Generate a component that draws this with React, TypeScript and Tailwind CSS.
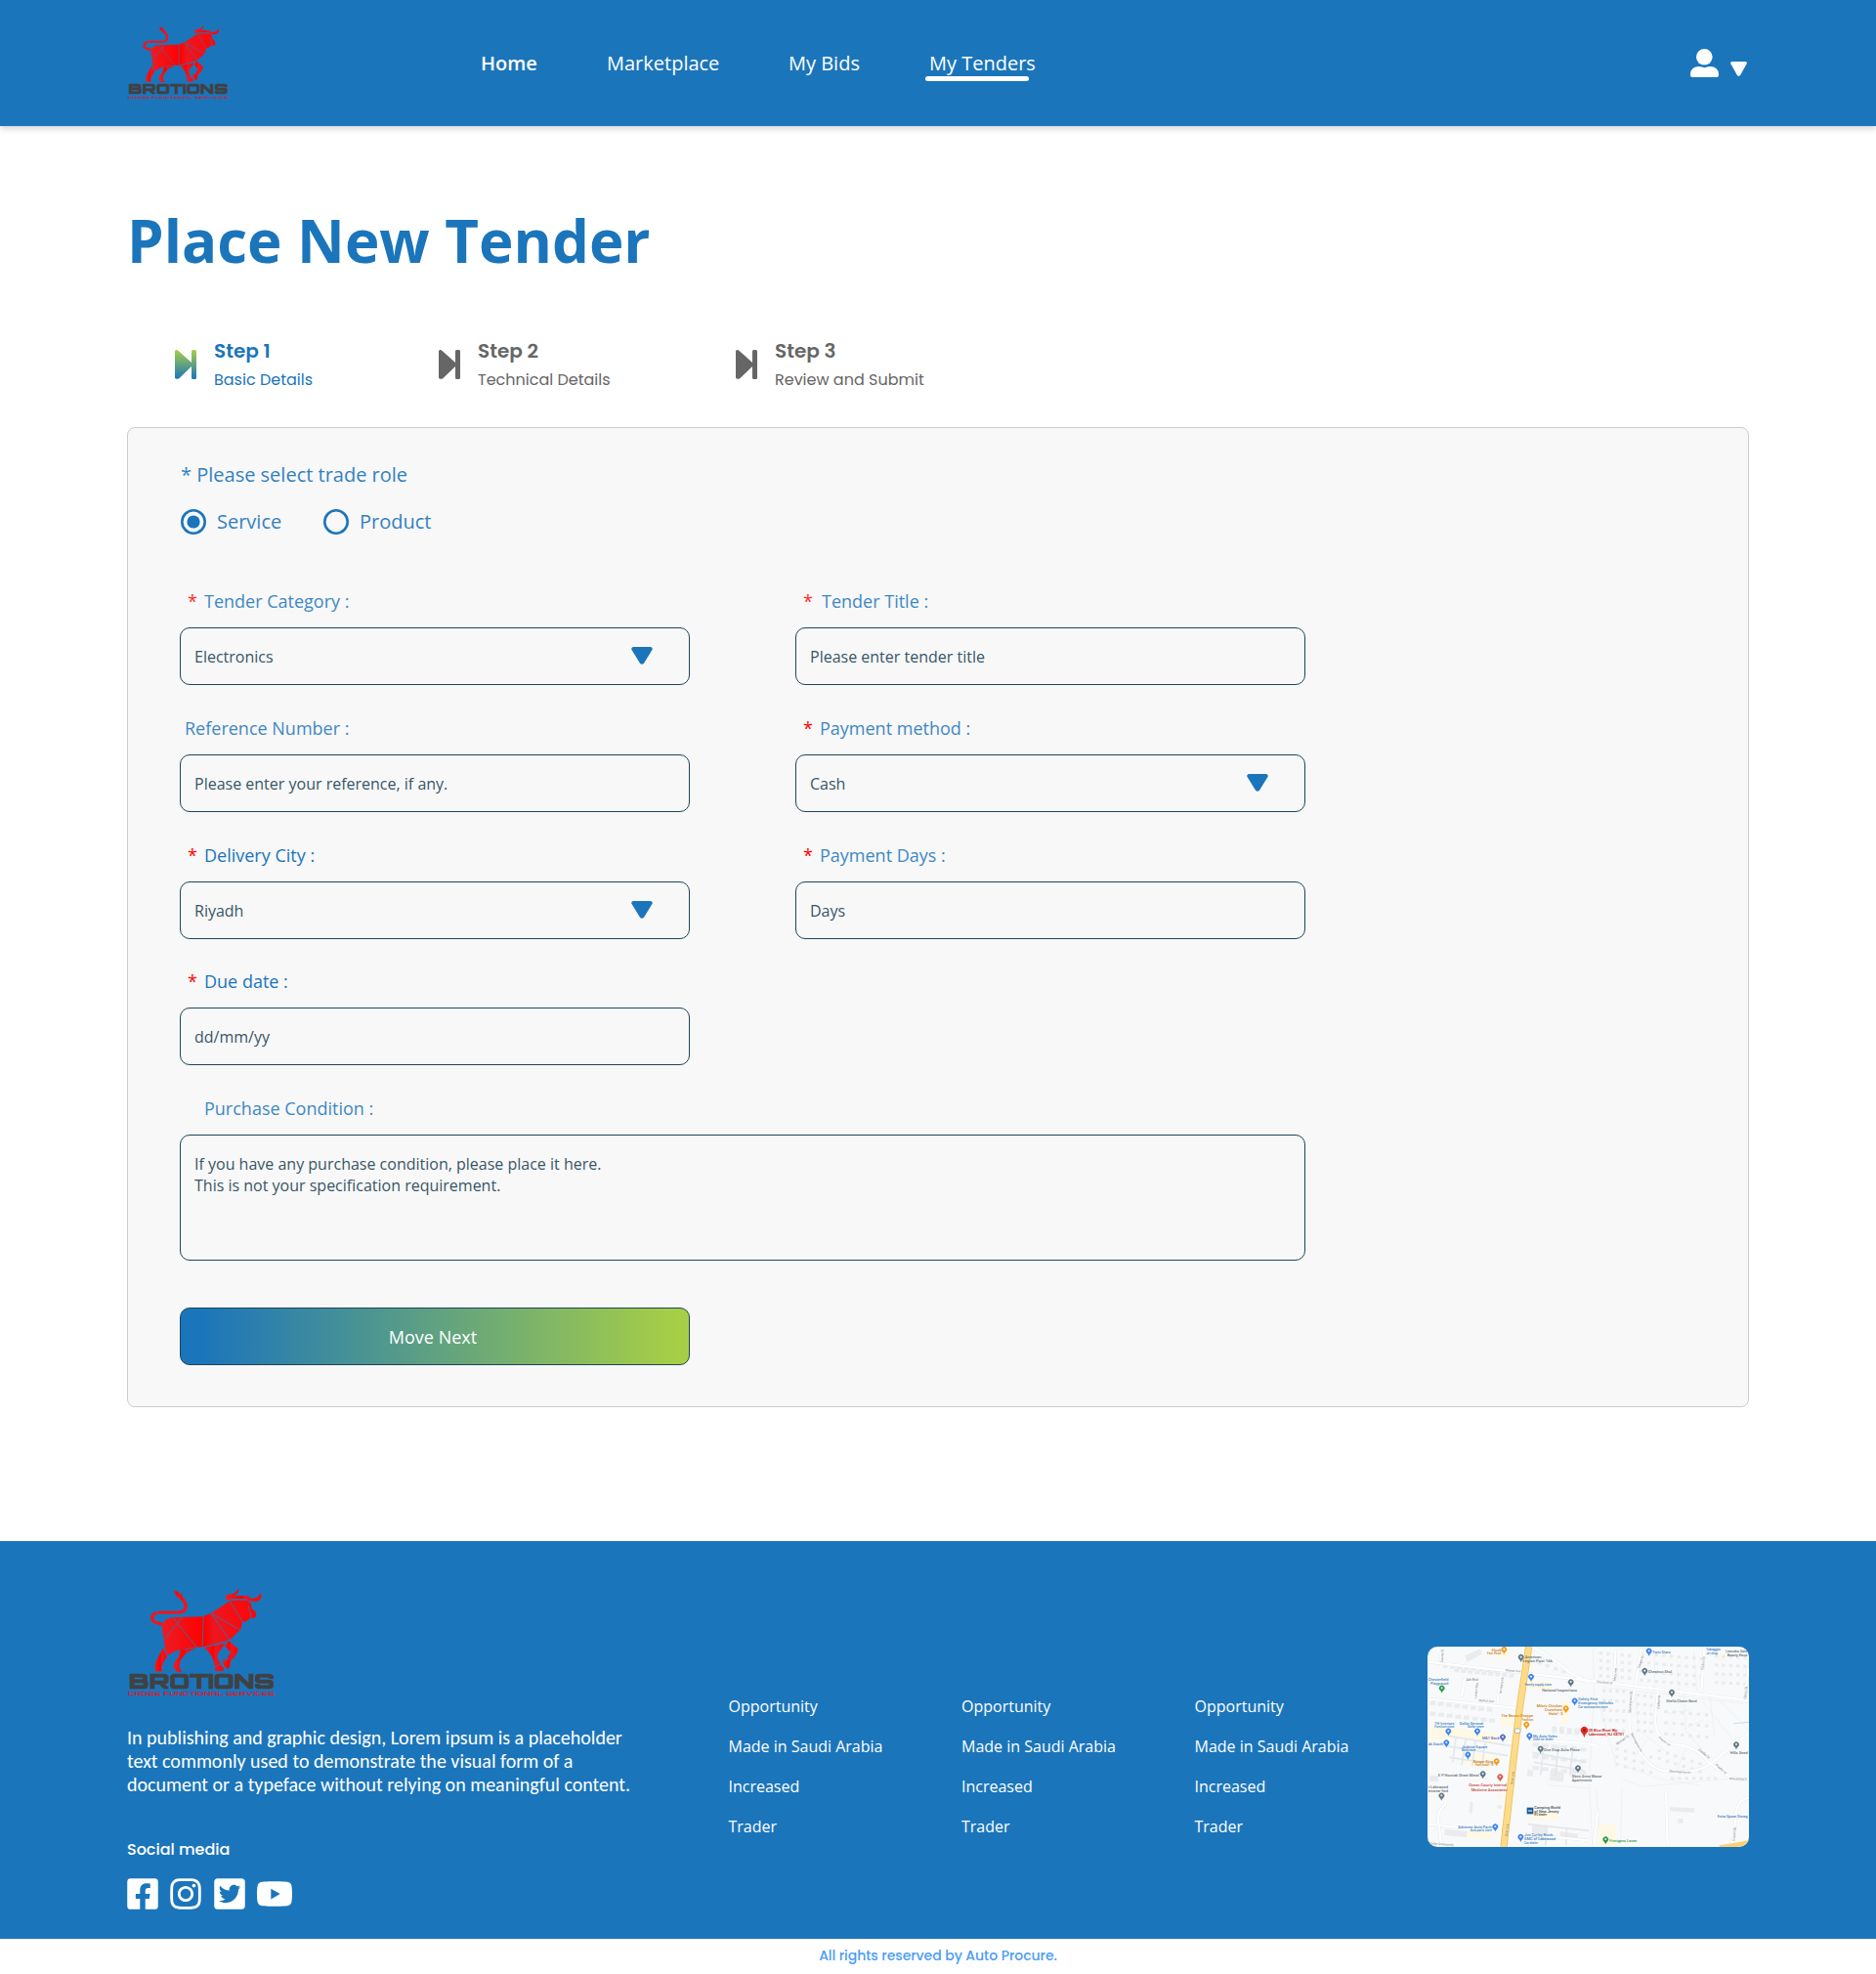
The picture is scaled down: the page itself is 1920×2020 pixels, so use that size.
import React from "react";
import { FaFacebookSquare, FaInstagram, FaTwitterSquare, FaYoutube } from "react-icons/fa";

function Logo({ className }: { className: string }) {
  return (
    <svg className={className} viewBox="62 72 456 339" preserveAspectRatio="none">
      <defs>
        <linearGradient id="bull" x1="0" x2="1" y1="0" y2="0">
          <stop offset="0" stopColor="#ed1c24" />
          <stop offset="0.45" stopColor="#ff0000" />
          <stop offset="0.55" stopColor="#ed1620" />
          <stop offset="1" stopColor="#ff0505" />
        </linearGradient>
      </defs>
      <g transform="scale(1.0714 1)">
        <path
          d="M211 104C230 118 234 150 205 150L150 150C127 152 126 171 136 179L158 187"
          fill="none"
          stroke="#f5121a"
          strokeWidth="9.5"
        />
        <g fill="url(#bull)">
          <path d="M191 83Q205 83 216 97L217 112Q198 104 191 83Z" />
          <path d="M158 186Q168 168 190 165L272 163Q300 154 315 141L352 115Q380 110 402 114L413 122L415 138L426 148L428 162Q422 171 411 166L400 177L388 181L384 202Q370 216 353 234L338 243L280 256L250 257Q215 261 195 269L172 283Q166 268 164 235Q158 205 158 186Z" />
          <path d="M162 258L173 285Q160 302 156 322L161 331L140 331L137 315Q140 298 150 281Z" />
          <path d="M210 265L258 259Q228 270 215 291Q206 306 208 320L215 333L198 331L191 315Q193 300 206 288Z" />
          <path d="M278 257L338 246L329 262Q317 272 317 286Q320 306 334 320L335 329L310 330Q310 305 303 290Q296 272 278 257Z" />
          <path d="M350 237L376 262Q374 282 356 297L349 325L336 315L330 296L344 293L355 272L338 253Z" />
          <path d="M342 111Q337 98 347 95L361 93Q374 86 378 75Q380 91 365 98L404 99L413 108Q437 107 441 89Q449 113 425 117L408 115Q380 105 358 112Z" />
        </g>
        <g stroke="#3a6ea5" strokeWidth="2.6" fill="none">
          <path d="M189 165L258 258M216 165L165 232M277 161L274 257M299 153L352 235M299 153L384 205M352 115L391 181M278 257L352 235M162 258L173 284M355 109L402 110M330 302L352 290M405 130L415 165M145 145L143 155M308 318L334 305" />
        </g>
        <text
          x="63"
          y="383"
          fontFamily="Orbitron, 'DejaVu Sans', sans-serif"
          fontWeight="900"
          fontSize="62"
          fill="#414042"
          stroke="#414042"
          strokeWidth="2"
          textLength="418"
          lengthAdjust="spacingAndGlyphs"
        >
          BROTIONS
        </text>
        <text
          x="60"
          y="405"
          fontFamily="Orbitron, 'DejaVu Sans', sans-serif"
          fontWeight="900"
          fontSize="17"
          fill="#c1273d"
          textLength="421"
          lengthAdjust="spacingAndGlyphs"
        >
          CROSS FUNCTIONAL SERVICES
        </text>
      </g>
    </svg>
  );
}

function Triangle({ className }: { className: string }) {
  return (
    <svg className={className} viewBox="0 0 22 19" preserveAspectRatio="none" fill="currentColor">
      <path d="M2 0H20Q22.3 .6 21.6 3L13 17.6Q11 20 9 17.6L.4 3Q-.3 .6 2 0Z" />
    </svg>
  );
}

function Radio({ checked, className }: { checked?: boolean; className?: string }) {
  return (
    <svg className={`size-[26px] text-[#1b75bb] ${className ?? ""}`} viewBox="0 0 26 26">
      <circle cx="13" cy="13" r="11.7" fill="none" stroke="currentColor" strokeWidth="2.6" />
      {checked && <circle cx="13" cy="13" r="6.6" fill="currentColor" />}
    </svg>
  );
}

function Header() {
  return (
    <header className="relative flex h-[129px] bg-[#1b75bb] text-white shadow-[0_3px_6px_rgba(0,0,0,0.16)]">
      <Logo className="ml-[130px] mt-[25px] h-[77px] w-[104px]" />
      <nav className="ml-[257px] mt-[51px] flex items-start text-xl leading-7">
        <a className="w-[130px] pl-px font-semibold">Home</a>
        <a className="w-[186px]">Marketplace</a>
        <a className="w-[144px]">My Bids</a>
        <a className="relative whitespace-nowrap">
          My Tenders
          <span className="absolute -left-1 top-[27px] h-[5px] w-[106px] rounded-full bg-white" />
        </a>
      </nav>
      <div className="ml-auto mr-[132px] mt-[50px] flex items-start">
        <svg className="h-[29px] w-[30px]" viewBox="0 0 30 29" fill="currentColor">
          <circle cx="14.3" cy="8.3" r="8.3" />
          <path d="M0 27V26Q.5 18 9 18Q12 18.3 14.5 19.2Q17 18.300 20 18Q28.500 18 29 26V27Q29 29 27 29H2Q0 29 0 27Z" />
        </svg>
        <Triangle className="ml-[11px] mt-[13px] h-[15px] w-[17px]" />
      </div>
    </header>
  );
}

function Step({ title, text, active, className }: { title: string; text: string; active?: boolean; className: string }) {
  return (
    <div className={`flex items-start ${active ? "text-[#1b75bb]" : "text-[#666666]"} ${className}`}>
      <svg className="mt-[11px] h-[30px] w-[22px]" viewBox="0 0 22 30">
        <defs>
          <linearGradient id="stepActive" gradientUnits="userSpaceOnUse" x1="0" x2="0" y1="0" y2="30">
            <stop offset="0" stopColor="#a7cf45" />
            <stop offset="1" stopColor="#1b75bb" />
          </linearGradient>
        </defs>
        <path
          fill={active ? "url(#stepActive)" : "currentColor"}
          d="M0 1.5Q.5 -.5 3 .4L17 13V1.5Q17 0 18.5 0H20.5Q22 0 22 1.5V28.5Q22 30 20.5 30H18.5Q17 30 17 28.5V17L4 29.5Q.5 30.5 0 28.5Z"
        />
      </svg>
      <div className="ml-[18px] flex flex-col gap-[6px] whitespace-nowrap font-[Poppins,Inter,sans-serif]">
        <span className="text-xl font-semibold leading-6">{title}</span>
        <span className="text-base leading-6">{text}</span>
      </div>
    </div>
  );
}

type FieldProps = {
  label: string;
  value: string;
  required?: boolean;
  select?: boolean;
  labelClass: string;
  starClass?: string;
  className?: string;
};

function Field({ label, value, required, select, labelClass, starClass, className }: FieldProps) {
  return (
    <div className={`flex flex-col gap-[15px] ${className ?? ""}`}>
      <label className="flex h-6 text-lg leading-6 text-[#1b75bb]">
        {required && <span className={`ml-2 w-[10px] text-[#ff0000] ${starClass ?? ""}`}>*</span>}
        <span className={labelClass}>{label}</span>
      </label>
      <div className="flex h-[59px] items-center justify-between rounded-[10px] border border-[#1e4557] pl-[14px] pr-[37px] text-base text-[#1e4557]">
        <span className="opacity-90">{value}</span>
        {select && <Triangle className="-mt-px h-[18px] w-[22px] text-[#1b75bb]" />}
      </div>
    </div>
  );
}

const blue = "#3b82f0";
const slate = "#5f7a85";
const orange = "#f29a14";

const pins: [number, number, string][] = [
  [298, 56, orange], [350, 80, slate], [381, 140, blue], [503, 156, slate], [515, 214, blue], [488, 237, orange],
  [107, 175, "#2b9a4a"], [367, 287, orange], [127, 307, blue], [216, 307, blue], [294, 325, "#5c6bc0"], [121, 342, blue],
  [376, 321, blue], [187, 379, blue], [275, 399, orange], [410, 361, slate], [525, 420, slate], [233, 438, slate],
  [286, 447, "#e0524f"], [106, 505, slate], [271, 600, blue], [349, 632, blue], [610, 639, "#2b9a4a"], [743, 61, blue],
  [730, 122, slate], [813, 188, slate], [1011, 348, slate],
];

const places: [number, number, string, string, number][] = [
  [260, 60, "Flysh", "#d0801a", 30], [246, 69, "Fast Food", "#d0801a", 42], [362, 81, "American", "#5f6f78", 50],
  [355, 93, "Legion Post 166", "#5f6f78", 92], [362, 164, "Family supply store", "#3d82c4", 82],
  [415, 184, "National Inspections", "#5f6f78", 107], [526, 209, "Safety First", "#3d82c4", 60],
  [526, 221, "Emergency Vehicles", "#3d82c4", 107], [526, 233, "Car accessories store", "#3d82c4", 90],
  [398, 231, "Mike's Chicken", "#d0801a", 79], [422, 244, "Crunchers", "#d0801a", 55], [435, 256, "Halal • $", "#d0801a", 43],
  [289, 262, "The Bacon Shoppe", "#d0801a", 98], [354, 273, "Fashion", "#d0801a", 34], [85, 284, "TH Interiors", "#3d82c4", 60],
  [85, 293, "Furniture store", "#3d82c4", 60], [161, 284, "Dollar General", "#3d82c4", 73], [186, 294, "Dollar store", "#3d82c4", 50],
  [231, 331, "M&T Bank", "#5c6bc0", 53], [387, 324, "My Auto Sales", "#3d82c4", 74], [387, 334, "Used car dealer", "#3d82c4", 62],
  [65, 348, "ak South", "#3d82c4", 46], [168, 356, "Judaica Square", "#3d82c4", 79], [168, 366, "Book store", "#3d82c4", 42],
  [420, 367, "One Stop Auto Place", "#5f6f78", 110], [203, 402, "Burger King", "#d0801a", 62], [209, 412, "Fast food • $", "#d0801a", 56],
  [96, 444, "E P Homiak Sheet Metal", "#5f6f78", 125], [506, 448, "Glenn Arms Manor", "#5f6f78", 92],
  [506, 460, "Apartments", "#5f6f78", 62], [190, 475, "Ocean County Internal", "#c9443f", 116], [197, 488, "Medicine Associates", "#c9443f", 110],
  [65, 479, "r Lakewood", "#5f6f78", 61], [65, 491, "emarcar Yard", "#5f6f78", 61], [391, 543, "Camping World", "#3f4a52", 80],
  [391, 554, "of New Jersey", "#3f4a52", 75], [391, 563, "RV dealer", "#3f4a52", 38], [157, 602, "Advance Auto Parts", "#3d82c4", 104],
  [194, 611, "Auto parts store", "#3d82c4", 67], [360, 627, "Jim Curley Buick", "#3d82c4", 88], [360, 640, "GMC of Lakewood", "#3d82c4", 96],
  [360, 650, "Car dealer", "#3d82c4", 42], [622, 646, "Finnigans Lanes", "#2b9a4a", 84], [754, 66, "Twin Stars", "#3d82c4", 55],
  [918, 58, "Tobaggio", "#3d82c4", 44], [920, 69, "art shop", "#3d82c4", 34], [979, 62, "Leandro Salo", "#5f6f78", 66],
  [983, 75, "Beauty Hous", "#5f6f78", 62], [741, 127, "Chestnut Shul", "#5f6f78", 72], [796, 215, "Shella Charm Band", "#5f6f78", 94],
  [992, 375, "Hills Seed", "#5f6f78", 54], [953, 569, "Extra Space Storag", "#3d82c4", 93], [65, 149, "Chesterfield", "#3d82c4", 62],
  [72, 162, "Playground", "#3d82c4", 55],
];

const streets: [number, number, number, string][] = [
  [302, 121, 4, "Walnut Ave"], [182, 150, 0, "Ash Blvd"], [220, 213, 4, "Walnut Ave"], [582, 156, 5, "Chestnut St"],
  [325, 468, -84, "River Ave"], [308, 628, -84, "River Ave"], [214, 204, -85, "Linden Way"], [290, 188, -82, "Kimberly Ct"],
  [687, 248, -86, "Morningview St"], [686, 312, 62, "Morningview Dr"], [805, 430, 4, "Morningview Dr"], [893, 362, 40, "Chadler Dr"],
  [640, 150, -84, "Mary Ave"], [713, 114, -70, "Towers St"], [910, 118, -84, "Carlton St"], [1040, 206, -82, "Nancy St"],
  [772, 325, 38, "Casmir Dr"], [946, 408, 44, "Chadler Dr"], [990, 453, 3, "Wheatfield D"], [645, 347, -35, "Michael Ct"],
  [110, 94, -87, "County Ct"], [1006, 642, -85, "Airport Rd"], [775, 236, -87, "Carlton St"], [68, 652, 4, "Cedar Community"],
];

function StreetMap() {
  const lots: React.ReactNode[] = [];
  const block = (key: string, x: number, y: number, cols: number, rows: number, dx: number, dy: number, skew: number, w = 13, h = 10) => {
    for (let r = 0; r < rows; r++)
      for (let c = 0; c < cols; c++)
        lots.push(<rect key={`${key}${r}-${c}`} x={x + c * dx} y={y + r * dy + c * skew} width={w} height={h} />);
  };
  block("a", 145, 112, 9, 1, 21, 24, 2, 15, 12);
  block("b", 110, 100, 8, 1, 22, 20, 2, 14, 11);
  block("c", 70, 212, 8, 1, 25, 24, 3, 17, 12);
  block("d", 70, 245, 8, 1, 26, 24, 3, 18, 12);
  block("e", 400, 90, 4, 1, 25, 22, 9);
  block("f", 590, 60, 5, 4, 22, 23, 2, 10, 10);
  block("g", 715, 62, 9, 4, 23, 27, 2, 10, 9);
  block("h", 945, 70, 5, 4, 22, 27, 1, 10, 9);
  block("i", 600, 175, 4, 5, 20, 30, 1, 10, 10);
  block("j", 705, 190, 3, 5, 20, 27, 2, 10, 9);
  block("k", 790, 240, 6, 3, 25, 34, 2, 10, 9);
  block("l", 640, 355, 5, 3, 26, 24, 6, 10, 9);
  block("m", 770, 360, 6, 2, 25, 24, 8, 10, 9);
  block("n", 810, 445, 7, 1, 22, 20, 0, 10, 9);
  block("o", 385, 340, 6, 3, 29, 36, 3, 20, 12);
  block("p", 445, 290, 6, 1, 23, 25, 2, 15, 20);
  const roads =
    "M63 92L350 125L590 153L1050 210M63 205L345 235M385 45Q450 80 500 125L560 155M177 142L168 200M287 135L278 215M375 330L550 342Q585 345 590 358M700 175L685 235Q672 310 715 370T800 425Q880 435 925 410L1050 310M770 185L762 270Q762 330 820 345Q890 350 925 400L1000 450L1050 455M640 55L636 150M720 48L702 160M912 60L904 185M1048 110L1038 205M585 550Q580 610 575 655M795 490L800 655M1050 510Q1015 512 1010 560L1000 655M120 480L118 530Q90 550 98 590L105 655M63 590L300 615M355 620L560 640M107 45L105 100";
  return (
    <svg className="h-[205px] w-[329px] rounded-[10px]" viewBox="63 45 987 615" fontFamily="Roboto, sans-serif">
      <rect x="63" y="45" width="987" height="615" fill="#f8f9fa" />
      <g fill="#fef8e5">
        <path d="M66 288L280 312L274 345L170 328L66 334ZM290 256L330 265L325 292L286 288ZM370 148L445 155L442 180L368 174ZM473 210H495V280H473ZM180 370L260 380L256 418L176 408ZM376 550L466 556L462 580L374 574ZM590 592H642V655H586ZM178 606L260 615L256 638L176 630ZM280 66H318V80H278ZM958 66L972 68V88H956ZM278 494H290V512H278Z" />
      </g>
      <g fill="#e9ebed">
        {lots}
        <path d="M70 440L95 442V460L68 458ZM195 520L203 524L200 558L190 552ZM116 605L185 612L183 630L116 624ZM807 538L882 541V554L807 550ZM832 573H848V587H832ZM278 532H291V542H278ZM370 420L388 428L385 445L368 440ZM440 425L482 430L480 460L438 456ZM178 72L225 52L230 68L185 92ZM384 592L430 596V640L384 634ZM470 612L525 620V640L470 634Z" />
      </g>
      <g fill="none" stroke="#e6e8ea" strokeWidth="1.5">
        <path d="M570 50L575 160L560 450M600 170L1045 220M590 220L640 400L770 450L900 470M700 170L710 300L800 370M850 190L855 300L920 380M930 200L945 320M905 210L1000 330M560 470L570 655M660 480L655 655M580 480L590 600M830 100L835 190M880 60L890 180M760 60V175M640 60L650 150M660 450L720 475L1000 450M430 470L560 480M960 210L1048 300M850 300L910 270M800 250L870 240M740 330L700 380M860 350L830 420" />
      </g>
      <g fill="none" stroke="#e4e7eb" strokeWidth="5">
        <path d="M130 320L320 350M120 350L310 380M150 325L140 400M180 330L168 408M210 335L200 412M240 340L230 416M130 385L270 405M385 370L550 400M390 400L545 425M420 350L410 440M465 350L455 445M510 350L500 440M370 590L560 610M430 598L425 655M490 604L488 655" />
      </g>
      <path d={roads} fill="none" stroke="#e2e5e9" strokeWidth="9" />
      <path d={roads} fill="none" stroke="#ffffff" strokeWidth="7" />
      <path d="M1003 281L1050 277" stroke="#a9cdea" strokeWidth="2" />
      <path d="M374 45L345 240L326 400L297 660" fill="none" stroke="#edc25c" strokeWidth="22" />
      <path d="M374 45L345 240L326 400L297 660" fill="none" stroke="#fddb8b" strokeWidth="17" />
      <path d="M960 662L1050 647" stroke="#fbd174" strokeWidth="14" />
      <rect x="331" y="297" width="17" height="13" rx="4" fill="#fff" stroke="#777" strokeWidth="1.5" />
      <g fontSize="9.5" fill="#777f85">
        {streets.map(([x, y, a, t], i) => (
          <text key={i} x={x} y={y} transform={`rotate(${a} ${x} ${y})`}>{t}</text>
        ))}
      </g>
      <g fontSize="12.5" fontWeight="500">
        {places.map(([x, y, t, c, w], i) => (
          <text key={i} x={x} y={y} fill={c} textLength={w} lengthAdjust="spacingAndGlyphs">{t}</text>
        ))}
      </g>
      {pins.map(([x, y, c], i) => (
        <g key={i} transform={`translate(${x} ${y})`}>
          <path d="M0 13Q-1.5 7 -6 3.5A8.5 8.5 0 1 1 6 3.5Q1.5 7 0 13Z" fill={c} />
          <circle cx="0" cy="-3" r="3.2" fill="#fff" opacity="0.85" />
        </g>
      ))}
      <rect x="368" y="539" width="20" height="20" fill="#1d5d9b" />
      <path d="M372 549H384" stroke="#fff" strokeWidth="3" />
      <path d="M544 325Q542 314 537 310A11 11 0 1 1 552 310Q546 314 544 325Z" fill="#e02b27" />
      <circle cx="544.5" cy="302" r="4" fill="#a51512" />
      <g fontSize="12.5" fontWeight="700" fill="#c92f2b">
        <text x="557" y="306" textLength="90" lengthAdjust="spacingAndGlyphs">29 Blue River Wy,</text>
        <text x="557" y="318" textLength="110" lengthAdjust="spacingAndGlyphs">Lakewood, NJ 08701</text>
      </g>
    </svg>
  );
}

function LinkColumn() {
  return (
    <ul className="flex w-[238.5px] flex-col gap-[17px] text-base leading-6">
      <li>Opportunity</li>
      <li>Made in Saudi Arabia</li>
      <li>Increased</li>
      <li>Trader</li>
    </ul>
  );
}

function Footer() {
  return (
    <footer className="mt-[137px] flex h-[407px] bg-[#1b75bb] pl-[130px] text-white">
      <div className="w-[615.5px] pt-[47px]">
        <Logo className="h-[113px] w-[152px]" />
        <p className="mt-[29px] whitespace-nowrap font-[Carlito,Calibri,sans-serif] text-xl leading-6">
          In publishing and graphic design, Lorem ipsum is a placeholder
          <br />
          text commonly used to demonstrate the visual form of a
          <br />
          document or a typeface without relying on meaningful content.
        </p>
        <p className="mt-[43px] font-[Poppins,Inter,sans-serif] text-base font-medium leading-6">Social media</p>
        <div className="mt-[15px] flex h-9 items-center">
          <FaFacebookSquare className="h-9 w-8" />
          <FaInstagram className="ml-3 h-9 w-8" />
          <FaTwitterSquare className="ml-[13px] h-9 w-8" />
          <FaYoutube className="ml-[11px] h-9 w-[38px]" />
        </div>
      </div>
      <div className="flex w-[715.5px] pt-[157px]">
        <LinkColumn />
        <LinkColumn />
        <LinkColumn />
      </div>
      <div className="pt-[108px]">
        <StreetMap />
      </div>
    </footer>
  );
}

export default function App() {
  return (
    <div className="h-[2020px] w-[1920px] overflow-hidden bg-white font-['Open_Sans',sans-serif]">
      <Header />
      <main className="px-[130px]">
        <h1 className="mt-[81px] text-[60px] font-bold leading-[72px] text-[#1b75bb]">Place New Tender</h1>
        <div className="mt-[65px] flex pl-[49px]">
          <Step className="w-[270px]" title="Step 1" text="Basic Details" active />
          <Step className="w-[304px]" title="Step 2" text="Technical Details" />
          <Step className="w-[220px]" title="Step 3" text="Review and Submit" />
        </div>
        <section className="mt-[36px] h-[1003px] rounded-lg border border-[#cccccc] bg-[#f8f8f8] pl-[53px] pt-[34px]">
          <p className="pl-px text-xl leading-7 text-[#1b75bb] opacity-90">* Please select trade role</p>
          <div className="mt-[21px] flex h-[26px] items-center text-xl text-[#1b75bb]">
            <Radio checked className="ml-px" />
            <span className="ml-[11px] w-[109px] opacity-90">Service</span>
            <Radio />
            <span className="ml-[11px] opacity-90">Product</span>
          </div>
          <div className="mt-[56px] grid grid-cols-[522px_522px] gap-x-[108px] gap-y-8">
            <Field label="Tender Category :" value="Electronics" required select labelClass="ml-[7px] opacity-85" starClass="opacity-85" />
            <Field label="Tender Title :" value="Please enter tender title" required labelClass="ml-[9px] opacity-85" starClass="opacity-85" />
            <Field label="Reference Number :" value="Please enter your reference, if any." labelClass="ml-[5px] opacity-85" />
            <Field label="Payment method :" value="Cash" required select labelClass="ml-[7px] opacity-85" />
            <Field label="Delivery City :" value="Riyadh" required select labelClass="ml-[7px]" />
            <Field label="Payment Days :" value="Days" required labelClass="ml-[7px] opacity-85" />
            <Field className="-mt-px" label="Due date :" value="dd/mm/yy" required labelClass="ml-[7px]" />
          </div>
          <p className="mt-8 pl-[25px] text-lg leading-6 text-[#1b75bb] opacity-85">Purchase Condition :</p>
          <div className="mt-[15px] h-[129px] w-[1152px] rounded-[10px] border border-[#1e4557] px-[14px] pt-[18px] text-base leading-[22px] text-[#1e4557]">
            <p className="opacity-90">
              If you have any purchase condition, please place it here.
              <br />
              This is not your specification requirement.
            </p>
          </div>
          <button className="mt-12 h-[59px] w-[522px] rounded-[10px] border border-[#1e4557] bg-[linear-gradient(90deg,#1b75bb_4%,#a7cf45_98%)] pr-1 pt-px text-lg text-white">
            Move Next
          </button>
        </section>
      </main>
      <Footer />
      <p className="text-center font-[Poppins,Inter,sans-serif] text-sm font-medium leading-[34px] tracking-[-0.05px] text-[#4b9df3]">
        All rights reserved by Auto Procure.
      </p>
    </div>
  );
}
